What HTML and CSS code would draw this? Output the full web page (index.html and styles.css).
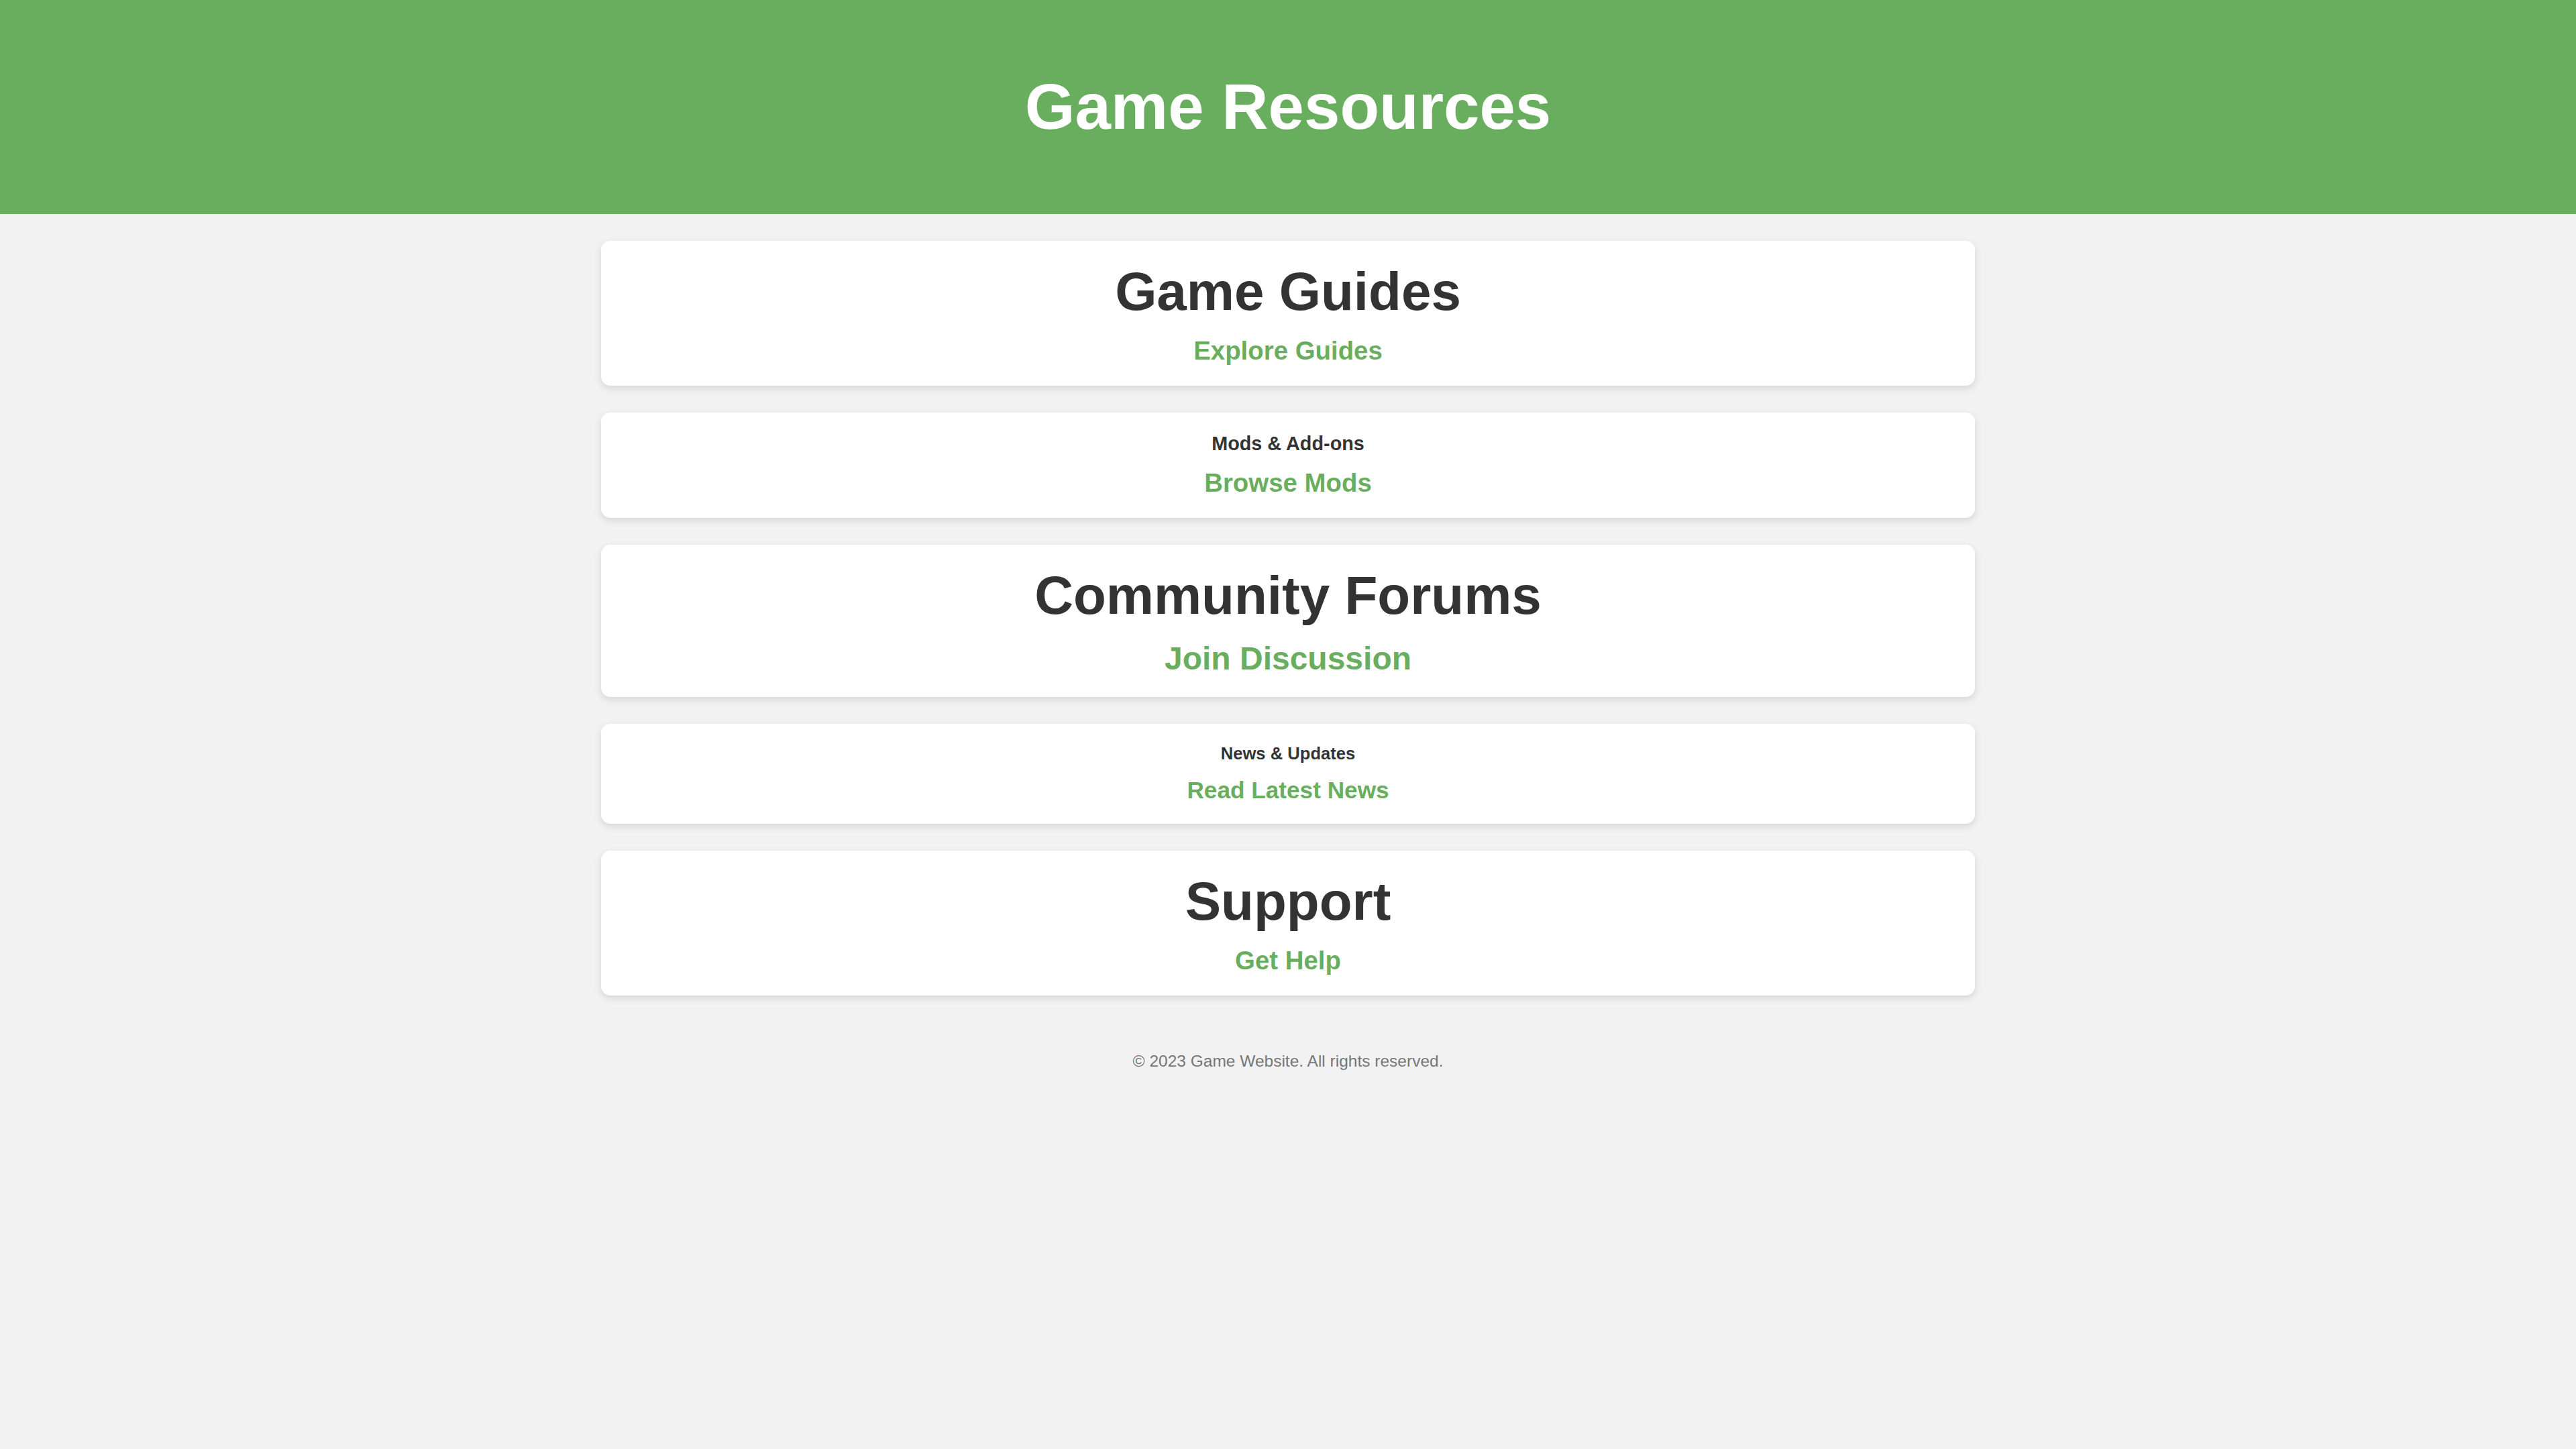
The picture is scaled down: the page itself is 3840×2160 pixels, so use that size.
FILE: index.html
```html
<!DOCTYPE html>
<html lang="en">
<head>
<meta charset="utf-8">
<title>Game Resources</title>
<link rel="stylesheet" href="styles.css">
</head>
<body>
<header class="site-header">
  <h1 class="site-title">Game Resources</h1>
</header>
<main class="resources">
  <section class="card">
    <h2 class="card-title card-title--large">Game Guides</h2>
    <a class="card-link" href="#">Explore Guides</a>
  </section>
  <section class="card">
    <h2 class="card-title card-title--small">Mods &amp; Add-ons</h2>
    <a class="card-link" href="#">Browse Mods</a>
  </section>
  <section class="card">
    <h2 class="card-title card-title--large">Community Forums</h2>
    <a class="card-link card-link--large" href="#">Join Discussion</a>
  </section>
  <section class="card">
    <h2 class="card-title card-title--tiny">News &amp; Updates</h2>
    <a class="card-link card-link--small" href="#">Read Latest News</a>
  </section>
  <section class="card">
    <h2 class="card-title card-title--large">Support</h2>
    <a class="card-link" href="#">Get Help</a>
  </section>
</main>
<footer class="site-footer">
  <p class="copyright">&copy; 2023 Game Website. All rights reserved.</p>
</footer>
</body>
</html>
```

FILE: styles.css
```css
html, body {
  margin: 0;
  padding: 0;
}

body {
  background: #f2f2f2;
  font-family: "Liberation Sans", Arial, sans-serif;
  font-size: 32px;
  color: #333333;
}

.site-header {
  background: #69ae5e;
  padding: 104px 0 105px;
  text-align: center;
}

.site-title {
  margin: 0;
  color: #ffffff;
  font-size: 96px;
  font-weight: bold;
  line-height: 110px;
}

.resources {
  width: 2048px;
  margin: 40px auto 0;
  display: flex;
  flex-direction: column;
  gap: 40px;
}

.card {
  background: #ffffff;
  border-radius: 14px;
  box-shadow: 0 4px 12px rgba(0, 0, 0, 0.12);
  padding: 30px 20px;
  text-align: center;
  display: flex;
  flex-direction: column;
  align-items: center;
}

.card-title {
  margin: 0 0 20px;
  color: #333333;
  font-weight: bold;
}

.card-title--large {
  font-size: 80px;
}

.card-title--small {
  font-size: 28.8px;
}

.card-title--tiny {
  font-size: 25.6px;
}

.card-link {
  color: #69ae5e;
  font-weight: bold;
  font-size: 38.4px;
  text-decoration: none;
}

.card-link--large {
  font-size: 48px;
}

.card-link--small {
  font-size: 35.2px;
}

.site-footer {
  padding: 84px 0 40px;
  text-align: center;
}

.copyright {
  margin: 0;
  color: #777777;
  font-size: 24.5px;
}
```
